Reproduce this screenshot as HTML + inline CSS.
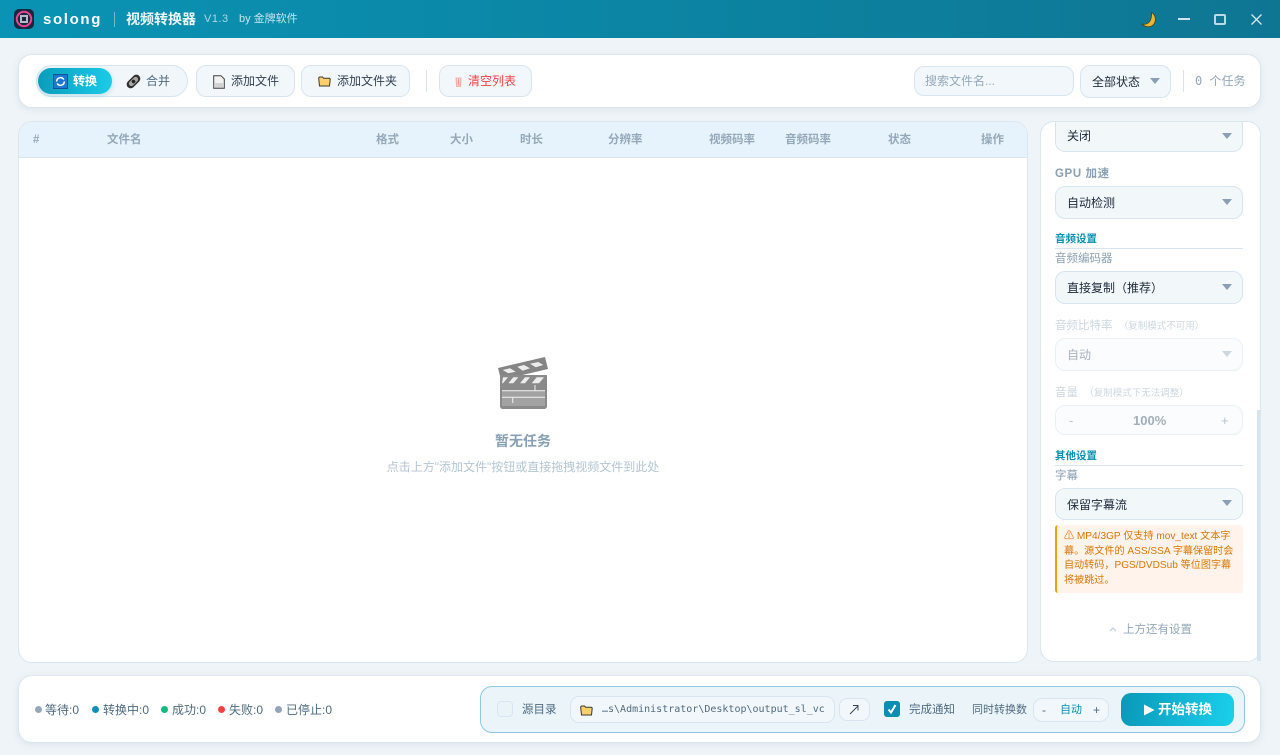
<!DOCTYPE html>
<html><head><meta charset="utf-8"><style>
*{box-sizing:border-box;margin:0;padding:0}
html,body{width:1280px;height:755px;overflow:hidden;background:#eff4f8;font-family:"Liberation Sans","WenQuanYi Zen Hei","Noto Sans CJK SC",sans-serif;color:#1e293b}
.a{position:absolute;white-space:nowrap}
.card{position:absolute;background:#fff;border:1px solid #dbe6ef;border-radius:14px;box-shadow:0 2px 8px rgba(100,130,160,.12)}
.btn{position:absolute;background:#f2f7fb;border:1px solid #d8e5f0;border-radius:10px;font-size:12px;line-height:30px;color:#334155;white-space:nowrap}
.th{position:absolute;top:133px;font-size:11.5px;line-height:14px;font-weight:700;color:#94a8ba;white-space:nowrap}
.sel{position:absolute;left:1055px;width:188px;background:#f2f7fa;border:1px solid #d8e5f0;border-radius:10px;font-size:12px;color:#1e293b;padding-left:11px;white-space:nowrap}
.arrow{position:absolute;width:0;height:0;border-left:5.5px solid transparent;border-right:5.5px solid transparent;border-top:6px solid #8a9fb3}
.lb{position:absolute;left:1055px;font-size:11.5px;line-height:14px;color:#8ba0b3;white-space:nowrap}
.sec{position:absolute;left:1055px;width:188px;font-size:10.5px;font-weight:700;color:#0891b2;line-height:12px;border-bottom:1px solid #d8e5ee;height:17px;padding-top:1px}
.st{position:absolute;top:702px;font-size:12px;line-height:16px;color:#4f6b82;white-space:nowrap}
.dot{position:absolute;top:706px;width:7px;height:7px;border-radius:50%}
</style></head><body>

<!-- title bar -->
<div class="a" style="left:0;top:0;width:1280px;height:38px;background:linear-gradient(90deg,#0a93b4,#0e7693)"></div>
<svg class="a" style="left:14px;top:9px" width="20" height="20" viewBox="0 0 20 20"><rect width="20" height="20" rx="5" fill="#1a2740"/><circle cx="10" cy="10" r="7.2" fill="none" stroke="#e8468f" stroke-width="2"/><rect x="6" y="6" width="8" height="8" fill="#b4bcc9"/><rect x="8" y="8" width="4" height="4" fill="#1a2740"/></svg>
<div class="a" style="left:43px;top:10px;font-size:15px;line-height:20px;font-weight:700;color:#fff;letter-spacing:1.65px">solong</div>
<div class="a" style="left:114px;top:12px;width:1px;height:15px;background:rgba(255,255,255,.4)"></div>
<div class="a" style="left:126px;top:10px;font-size:14px;line-height:18px;font-weight:700;color:#eaf6fa">视频转换器</div>
<div class="a" style="left:204px;top:12px;font-size:11px;line-height:14px;color:#a9d6e3;letter-spacing:.5px">V1.3</div>
<div class="a" style="left:239px;top:11px;font-size:11px;line-height:16px;color:#c5e5ee">by 金牌软件</div>
<svg class="a" style="left:1140px;top:11px" width="17" height="18" viewBox="0 0 17 18"><path d="M11.500 1.500C15 3.500 16.500 8 14.500 12C12.500 16 7 17.500 1.500 13C5.500 14 9 12.500 10.500 9C11.500 6.500 11.800 4 11.500 1.500Z" fill="#e8b830" stroke="#4a3f20" stroke-width=".8"/></svg>
<div class="a" style="left:1178px;top:18px;width:12px;height:2px;background:#cfe6ee"></div>
<div class="a" style="left:1214px;top:14px;width:12px;height:11px;border:2px solid #b8dbe6;border-radius:2px"></div>
<svg class="a" style="left:1251px;top:14px" width="11" height="11" viewBox="0 0 11 11"><path d="M.5.500L10.500 10.500M10.500.500L.5 10.500" stroke="#d5eaf1" stroke-width="1.300" fill="none"/></svg>

<!-- toolbar -->
<div class="card" style="left:18px;top:54px;width:1243px;height:54px"></div>
<div class="a" style="left:36px;top:65px;width:152px;height:32px;border-radius:16px;background:#f1f6fa;border:1px solid #d8e5f0"></div>
<div class="a" style="left:38px;top:68px;width:74px;height:26px;border-radius:13px;background:linear-gradient(90deg,#0a9dbb,#1bcbe8);box-shadow:0 2px 6px rgba(8,145,178,.22)"></div>
<svg class="a" style="left:53px;top:74px" width="15" height="15" viewBox="0 0 15 15"><rect width="15" height="15" fill="#14509a"/><rect x="1" y="1" width="13" height="13" fill="#1d78d2"/><path d="M3.700 7.500A3.800 3.800 0 0 1 10.800 5.600M11.300 7.500A3.800 3.800 0 0 1 4.200 9.400" fill="none" stroke="#fff" stroke-width="1.500"/></svg>
<div class="a" style="left:73px;top:73px;font-size:12px;line-height:17px;font-weight:700;color:#fff">转换</div>
<svg class="a" style="left:126px;top:74px" width="15" height="15" viewBox="0 0 15 15"><g transform="rotate(-45 7.500 7.500)"><rect x="-.5" y="3.500" width="16" height="8" rx="4" fill="#2f2f2f"/><rect x="2" y="5" width="11" height="5" rx="2.500" fill="#a8a8a8"/><circle cx="7.500" cy="7.500" r="1.800" fill="#222"/></g></svg>
<div class="a" style="left:146px;top:73px;font-size:12px;line-height:17px;color:#4f6b82">合并</div>

<div class="btn" style="left:196px;top:65px;width:99px;height:32px;padding-left:34px">添加文件</div>
<svg class="a" style="left:213px;top:75px" width="12" height="14" viewBox="0 0 12 14"><path d="M.7.700H8L11.300 4V13.300H.7Z" fill="#f2f2f2" stroke="#3f3f46"/><rect x="2" y="8" width="8" height="4.500" fill="#d2d2d2"/></svg>
<div class="btn" style="left:301px;top:65px;width:109px;height:32px;padding-left:35px">添加文件夹</div>
<svg class="a" style="left:318px;top:76px" width="13" height="11" viewBox="0 0 13 11"><path d="M.7 2.500C.7 1.500 1.200 1 2 1H4.500L5.700 2.200H11C11.800 2.200 12.200 2.700 12.200 3.500L11.500 10H1.500Z" fill="#fbd06a" stroke="#3b3a34"/></svg>
<div class="a" style="left:426px;top:70px;width:1px;height:22px;background:#d8e5ee"></div>
<div class="btn" style="left:439px;top:65px;width:93px;height:32px;padding-left:28px;color:#ef4444">清空列表</div>
<svg class="a" style="left:455px;top:77px" width="7" height="10" viewBox="0 0 7 10"><path d="M1 1H6L5.500 9.500H1.500Z" fill="#fbd5d5" stroke="#efa0a0" stroke-width=".8"/><path d="M3.500 2V8.500" stroke="#e88" stroke-width=".8"/></svg>

<div class="btn" style="left:914px;top:66px;width:160px;height:30px;line-height:29px;padding-left:10px;color:#94a8ba">搜索文件名...</div>
<div class="btn" style="left:1080px;top:65px;width:91px;height:33px;line-height:32px;padding-left:11px;color:#1e293b">全部状态</div>
<div class="arrow" style="left:1150px;top:78px"></div>
<div class="a" style="left:1183px;top:70px;width:1px;height:22px;background:#d8e5ee"></div>
<div class="a" style="left:1195px;top:73px;font-family:'DejaVu Sans Mono','WenQuanYi Zen Hei',monospace;font-size:12px;line-height:16px;color:#94a8ba">0 个任务</div>

<!-- table -->
<div class="card" style="left:18px;top:121px;width:1010px;height:542px;overflow:hidden;box-shadow:none"><div style="height:36px;background:#e6f3fc;border-bottom:1px solid #d8e5ee"></div></div>
<div class="th" style="left:33px">#</div>
<div class="th" style="left:107px">文件名</div>
<div class="th" style="left:376px">格式</div>
<div class="th" style="left:450px">大小</div>
<div class="th" style="left:520px">时长</div>
<div class="th" style="left:608px">分辨率</div>
<div class="th" style="left:709px">视频码率</div>
<div class="th" style="left:785px">音频码率</div>
<div class="th" style="left:888px">状态</div>
<div class="th" style="left:981px">操作</div>

<svg class="a" style="left:497px;top:355px" width="54" height="56" viewBox="0 0 54 56"><path d="M1 13L48 2L51 14L4 25Z" fill="#858585"/><path d="M5.700 15L13 13.300L18.700 16.700L11.300 18.300ZM20.300 11.700L27 10L33 13.300L25.700 15.700ZM33 8.700L41.300 7L46.300 10L38.700 12.300Z" fill="#ededed"/><path d="M3 20H50V51C50 53 48.500 54 47 54H6C4.500 54 3 53 3 51Z" fill="#8a8a8a"/><rect x="5" y="22" width="43" height="7" fill="#8a8a8a"/><path d="M5 28.300L6 22.300H11L6 28.300ZM11.300 28.300L16.300 22.300H21.300L16.300 28.300ZM23 28.300L28 22.300H33L28 28.300ZM34.700 28.300L39.700 22.300H47L42 28.300Z" fill="#ededed"/><rect x="5" y="36" width="43" height="15" fill="#a2a2a2"/><path d="M5 35.700H48M5 42.300H48M38 30V35.700M15.700 42.300V48" stroke="#e8e8e8" stroke-width="1.100" fill="none"/></svg>
<div class="a" style="left:0;top:431px;width:1046px;text-align:center;font-size:14px;line-height:20px;font-weight:700;color:#87a0b5">暂无任务</div>
<div class="a" style="left:0;top:459px;width:1046px;text-align:center;font-size:12px;line-height:17px;color:#b4c6d4">点击上方"添加文件"按钮或直接拖拽视频文件到此处</div>

<!-- settings panel -->
<div class="card" style="left:1040px;top:121px;width:221px;height:541px;box-shadow:none"></div>
<div class="a" style="left:1257px;top:410px;width:4px;height:251px;background:#d8e5ef"></div>
<div class="sel" style="top:122px;height:30px;line-height:28px;border-top:none;border-radius:0 0 10px 10px">关闭</div><div class="arrow" style="left:1222px;top:133px"></div>
<div class="lb" style="top:167px;font-weight:700;letter-spacing:.6px">GPU 加速</div>
<div class="sel" style="top:186px;height:33px;line-height:33px">自动检测</div><div class="arrow" style="left:1222px;top:199px"></div>
<div class="sec" style="top:232px">音频设置</div>
<div class="lb" style="top:252px">音频编码器</div>
<div class="sel" style="top:271px;height:33px;line-height:33px">直接复制（推荐）</div><div class="arrow" style="left:1222px;top:284px"></div>
<div class="lb" style="top:319px;color:#ccd8e2">音频比特率 <span style="font-size:9.500px;margin-left:3px">（复制模式不可用）</span></div>
<div class="sel" style="top:338px;height:33px;line-height:33px;background:#fbfcfe;border-color:#e9f0f6;color:#a8b4c0">自动</div><div class="arrow" style="left:1222px;top:351px;border-top-color:#ccd7e0"></div>
<div class="lb" style="top:386px;color:#ccd8e2">音量 <span style="font-size:9.500px;margin-left:3px">（复制模式下无法调整）</span></div>
<div class="sel" style="top:405px;height:30px;background:#fbfcfe;border-color:#e9f0f6"></div>
<div class="a" style="left:1069px;top:413px;font-size:13px;line-height:16px;color:#b8c4cf">-</div>
<div class="a" style="left:1133px;top:413px;font-size:13px;line-height:16px;font-weight:700;color:#a4afba">100%</div>
<div class="a" style="left:1221px;top:413px;font-size:13px;line-height:16px;color:#b8c4cf">+</div>
<div class="sec" style="top:449px">其他设置</div>
<div class="lb" style="top:469px">字幕</div>
<div class="sel" style="top:488px;height:32px;line-height:32px">保留字幕流</div><div class="arrow" style="left:1222px;top:500px"></div>
<div class="a" style="left:1055px;top:525px;width:188px;height:68px;background:#fff3eb;border-left:2px solid #f59e0b;border-radius:3px;padding:5px 0 0 7px;font-size:10.100px;line-height:14.500px;color:#d97706;overflow:hidden">⚠ MP4/3GP 仅支持 mov_text 文本字<br>幕。源文件的 ASS/SSA 字幕保留时会<br>自动转码，PGS/DVDSub 等位图字幕<br>将被跳过。</div>
<svg class="a" style="left:1109px;top:627px" width="8" height="5" viewBox="0 0 8 5"><path d="M1 4L4 1L7 4" fill="none" stroke="#b8c8d5"/></svg>
<div class="a" style="left:1123px;top:622px;font-size:11.500px;line-height:16px;color:#94a8ba">上方还有设置</div>

<!-- footer -->
<div class="card" style="left:18px;top:675px;width:1243px;height:68px"></div>
<div class="dot" style="left:35px;background:#94a8ba"></div><div class="st" style="left:45px">等待:0</div>
<div class="dot" style="left:92px;background:#0891b2"></div><div class="st" style="left:103px">转换中:0</div>
<div class="dot" style="left:161px;background:#10b981"></div><div class="st" style="left:172px">成功:0</div>
<div class="dot" style="left:218px;background:#ef4444"></div><div class="st" style="left:229px">失败:0</div>
<div class="dot" style="left:275px;background:#94a3b8"></div><div class="st" style="left:286px">已停止:0</div>

<div class="a" style="left:480px;top:686px;width:765px;height:47px;border-radius:12px;background:#ebf5f9;border:1px solid #8cc8e4"></div>
<div class="a" style="left:497px;top:701px;width:16px;height:16px;border-radius:4px;background:#e9f3f8;border:1px solid #d8e5f0"></div>
<div class="a" style="left:522px;top:702px;font-size:11.500px;line-height:16px;color:#4f6b82">源目录</div>
<div class="a" style="left:570px;top:696px;width:265px;height:27px;border-radius:9px;background:#f1f7fb;border:1px solid #d8e5f0"></div>
<svg class="a" style="left:580px;top:705px" width="13" height="11" viewBox="0 0 13 11"><path d="M.7 2.500C.7 1.500 1.200 1 2 1H4.500L5.700 2.200H11C11.800 2.200 12.200 2.700 12.200 3.500L11.500 10H1.500Z" fill="#fbd06a" stroke="#3b3a34"/></svg>
<div class="a" style="left:602px;top:702px;font-family:'DejaVu Sans Mono',monospace;font-size:10px;line-height:15px;color:#4f6b82">…s\Administrator\Desktop\output_sl_vc</div>
<div class="a" style="left:839px;top:698px;width:31px;height:23px;border-radius:8px;background:#f1f7fb;border:1px solid #d8e5f0"></div>
<svg class="a" style="left:849px;top:704px" width="10" height="11" viewBox="0 0 10 11"><path d="M1 10L9 2M4 1.500H9V6.500" fill="none" stroke="#334155" stroke-width=".9"/></svg>
<div class="a" style="left:884px;top:701px;width:16px;height:16px;border-radius:3px;background:#0a8fb0"></div>
<svg class="a" style="left:886px;top:703px" width="12" height="12" viewBox="0 0 12 12"><path d="M2.500 6.500L5 9.500L9.500 2" fill="none" stroke="#fff" stroke-width="2"/></svg>
<div class="a" style="left:909px;top:702px;font-size:11.500px;line-height:16px;color:#4f6b82">完成通知</div>
<div class="a" style="left:972px;top:702px;font-size:11px;line-height:16px;color:#4f6b82">同时转换数</div>
<div class="a" style="left:1033px;top:698px;width:76px;height:24px;border-radius:9px;background:#f1f7fb;border:1px solid #d8e5f0"></div>
<div class="a" style="left:1042px;top:702px;font-size:12px;line-height:16px;color:#4f6b82">-</div>
<div class="a" style="left:1060px;top:702px;font-size:11px;line-height:16px;color:#0891b2">自动</div>
<div class="a" style="left:1093px;top:702px;font-size:12px;line-height:16px;color:#4f6b82">+</div>
<div class="a" style="left:1121px;top:693px;width:113px;height:33px;border-radius:10px;background:linear-gradient(100deg,#0a98b8,#1bd0ec)"></div>
<svg class="a" style="left:1143px;top:704px" width="12" height="12" viewBox="0 0 12 12"><path d="M1 .5L11.500 6L1 11.500Z" fill="#fff"/></svg>
<div class="a" style="left:1158px;top:700px;font-size:13.500px;line-height:20px;font-weight:700;color:#fff">开始转换</div>
</body></html>
